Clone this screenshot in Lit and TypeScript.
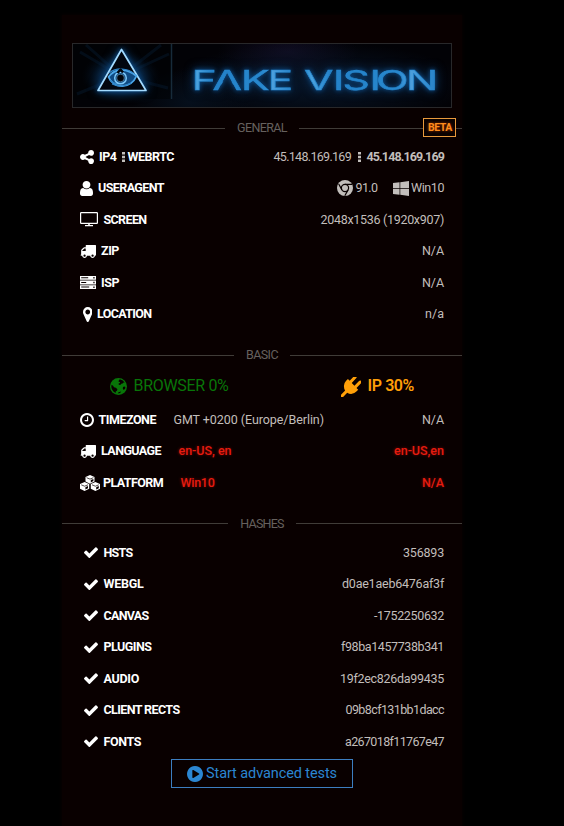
import { LitElement, html, svg, css } from "lit";
import { customElement, property } from "lit/decorators.js";
import { styleMap } from "lit/directives/style-map.js";

interface Icon { box: string; w: number; h: number; art: unknown }

const icons: Record<string, Icon> = {
  share: { box: "128 128 1536 1536", w: 14, h: 14, art: svg`<path d="M1344 1024q133 0 226.5 93.5t93.5 226.5-93.5 226.5-226.5 93.5-226.5-93.5-93.5-226.5q0-12 2-34l-360-180q-92 86-218 86-133 0-226.5-93.5t-93.5-226.5 93.5-226.5 226.5-93.5q126 0 218 86l360-180q-2-22-2-34 0-133 93.5-226.5t226.5-93.5 226.5 93.5 93.5 226.5-93.5 226.5-226.5 93.5q-126 0-218-86l-360 180q2 22 2 34t-2 34l360 180q92-86 218-86z"/>` },
  user: { box: "256 128 1280 1536", w: 13, h: 15, art: svg`<path d="M1536 1399q0 109-62.5 187t-150.5 78h-854q-88 0-150.5-78t-62.5-187q0-85 8.5-160.5t31.5-152 58.5-131 94-89 134.5-34.5q131 128 313 128t313-128q76 0 134.5 34.5t94 89 58.5 131 31.5 152 8.5 160.5zm-256-887q0 159-112.5 271.5t-271.5 112.5-271.5-112.5-112.5-271.5 112.5-271.5 271.5-112.5 271.5 112.5 112.5 271.5z"/>` },
  screen: { box: "0 0 18 15", w: 18, h: 15, art: svg`<path fill-rule="evenodd" d="M1.200 0h15.600Q18 0 18 1.200v9.600q0 1.200-1.200 1.200h-7v1h3.200v1.300h-8v-1.300h3.200v-1h-7Q0 12 0 10.800V1.200Q0 0 1.200 0zM1.200 1.200v9.600h15.600V1.200z"/>` },
  truck: { box: "0 256 1792 1408", w: 16, h: 13, art: svg`<path d="M640 1408q0-52-38-90t-90-38-90 38-38 90 38 90 90 38 90-38 38-90zm-384-512h384v-256h-158q-13 0-22 9l-195 195q-9 9-9 22v30zm1280 512q0-52-38-90t-90-38-90 38-38 90 38 90 90 38 90-38 38-90zm256-1088v1024q0 15-4 26.500t-13.500 18.500-16.500 11.500-23.500 6-22.500 2-25.500 0-22.500-.5q0 106-75 181t-181 75-181-75-75-181h-384q0 106-75 181t-181 75-181-75-75-181h-64q-3 0-22.500.5t-25.500 0-22.500-2-23.500-6-16.500-11.500-13.500-18.500-4-26.500q0-26 19-45t45-19v-320q0-8-.5-35t0-38 2.500-34.500 6.500-37 14-30.500 22.500-30l198-198q19-19 50.500-32t58.500-13h160v-192q0-26 19-45t45-19h1024q26 0 45 19t19 45z"/>` },
  server: { box: "0 0 16 13", w: 16, h: 13, art: svg`<path fill-rule="evenodd" d="M0 0h16v3.700H0zM1.200 1.300v1h7v-1zM13.300 1v1.500h1.300V1zM0 4.600h16v3.800H0zM1.200 6v1h5V6zM13.300 5.800v1.500h1.300V5.800zM0 9.300h16V13H0zM1.200 10.600v1h8v-1zM13.300 10.400v1.500h1.300v-1.500z"/>` },
  marker: { box: "384 128 1024 1536", w: 9.5, h: 15, art: svg`<path d="M1152 640q0-106-75-181t-181-75-181 75-75 181 75 181 181 75 181-75 75-181zm256 0q0 109-33 179l-364 774q-16 33-47.500 52t-67.500 19-67.500-19-46.500-52l-365-774q-33-70-33-179 0-212 150-362t362-150 362 150 150 362z"/>` },
  clock: { box: "128 128 1536 1536", w: 14, h: 14, art: svg`<path d="M1024 544v448q0 14-9 23t-23 9h-320q-14 0-23-9t-9-23v-64q0-14 9-23t23-9h224v-352q0-14 9-23t23-9h64q14 0 23 9t9 23zm416 352q0-148-73-273t-198-198-273-73-273 73-198 198-73 273 73 273 198 198 273 73 273-73 198-198 73-273zm224 0q0 209-103 385.500t-279.500 279.500-385.500 103-385.500-103-279.500-279.500-103-385.500 103-385.500 279.500-279.500 385.500-103 385.500 103 279.500 279.500 103 385.500z"/>` },
  cubes: { box: "0 0 20 16", w: 20, h: 16, art: svg`<path d="M10 0l4.500 1.900v4.700L10 8.800 5.500 6.600V1.900z"/><path d="M4.600 7.100l4.600 1.900v4.800L4.600 16 0 13.800V9z"/><path d="M15.400 7.100L20 9v4.800L15.400 16l-4.600-2.200V9z"/><g fill="none" stroke="#090000" stroke-width=".7"><path d="M6.600 2.700L10 4.100l3.400-1.400M1.200 9.800l3.400 1.400L8 9.800M12 9.800l3.400 1.400 3.400-1.400"/></g><g fill="#090000"><path d="M10.800 5.100l2.600-1.100v2.100l-2.600 1.300zM5.400 12.200L8 11.100v2.100l-2.600 1.300zM16.200 12.200l2.600-1.100v2.100l-2.600 1.300z"/></g>` },
  check: { box: "121 309 1550 1213", w: 14, h: 11, art: svg`<path d="M1671 566q0 40-28 68l-724 724-136 136q-28 28-68 28t-68-28l-136-136-362-362q-28-28-28-68t28-68l136-136q28-28 68-28t68 28l294 295 656-657q28-28 68-28t68 28l136 136q28 28 28 68z"/>` },
  play: { box: "128 128 1536 1536", w: 16, h: 16, art: svg`<path d="M896 128q209 0 385.500 103t279.500 279.500 103 385.500-103 385.500-279.500 279.500-385.500 103-385.500-103-279.500-279.500-103-385.500 103-385.500 279.500-279.500 385.500-103zm384 823q32-18 32-55t-32-55l-544-320q-31-19-64-1-32 19-32 56v640q0 37 32 56 16 8 32 8 17 0 32-9z"/>` },
  plug: { box: "0 128 1792 1664", w: 20.5, h: 20, art: svg`<path d="M1755 453q37 38 37 90.500t-37 90.500l-401 400 150 150-160 160q-163 163-389.500 186.500t-411.500-100.500l-362 362h-181v-181l362-362q-124-185-100.500-411.500t186.500-389.500l160-160 150 150 400-401q38-37 91-37t90 37 37 90.500-37 90.500l-400 401 234 234 401-400q38-37 91-37t90 37z"/>` },
  windows: { box: "64 128 1664 1664", w: 16, h: 15, art: svg`<path d="M746 1006v651l-682-94v-557h682zm0-743v659h-682v-565zm982 743v786l-907-125v-661h907zm0-878v794h-907v-669z"/>` },
  chrome: { box: "0 0 16 16", w: 16, h: 16, art: svg`<circle cx="8" cy="8" r="8"/><g fill="none" stroke="#090000" stroke-width="1.200"><circle cx="8" cy="8" r="3.600"/><path d="M8 4.400h7M4.900 9.900L1.700 4M11.100 9.900L7.800 15.700"/></g>` },
  globe: { box: "0 0 17 17", w: 17, h: 17, art: svg`<circle cx="8.500" cy="8.500" r="8.500"/><path fill="#090000" d="M9.800 1.200l3 1.300 1.900 2.300-1.200-.2-.9.900-1.300.2-1 1.300-1.500-.2-.2-1.200 1.500-.6-.2-1-1.300-.3.200-1.200zM1.500 6.700l1.600 1.100.9 1.500 1.900.5 1.500 1.400-.5 1.500-1.200.9v1.300l-2.300-1.500-1.600-2.300-.5-2.100zM13 9l1.400-.6 1 .7-.3 1.600-1.300 1.200-1-1.200zM8.500 14.200l2.700-.7-1.100 1.600-2.300.5z"/>` },
};

const icon = (name: string) => {
  const i = icons[name];
  return html`<svg class="icon" viewBox=${i.box} width=${i.w} height=${i.h} preserveAspectRatio="none">${i.art}</svg>`;
};

/* Text tracked out or in so that it fills a given measure. */
@customElement("fit-text")
export class FitText extends LitElement {
  @property() text = "";
  @property({ type: Number }) measure = 0;
  static styles = css`
    :host { display: block; white-space: pre; flex: none; }
  `;
  updated() {
    const span = this.renderRoot.querySelector("span")!;
    span.style.letterSpacing = "0px";
    const natural = span.getBoundingClientRect().width;
    span.style.letterSpacing = (this.measure - natural) / this.text.length + "px";
  }
  render() {
    return html`<div style=${styleMap({ width: this.measure + "px" })}><span>${this.text}</span></div>`;
  }
}

const fit = (text: string, measure: number, cls = "") =>
  html`<fit-text class=${cls} .text=${text} .measure=${measure}></fit-text>`;

const dots = html`<svg class="dots" width="3" height="10" viewBox="0 0 3 10"><path d="M0 0h3v2.600H0zM0 3.700h3v2.600H0zM0 7.400h3V10H0z"/></svg>`;

interface Row { icon: string; slot: number; label: unknown; mid?: unknown; value: unknown }

const name = (t: string, w: number) => fit(t, w, "name");

const general: Row[] = [
  { icon: "share", slot: 19, label: html`${name("IP4", 17.5)}<i class="gap5"></i>${dots}<i class="gap2"></i>${name("WEBRTC", 46.5)}`,
    value: html`${fit("45.148.169.169", 77.5)}<i class="gap7"></i>${dots}<i class="gap5"></i>${fit("45.148.169.169", 77.5, "strong")}` },
  { icon: "user", slot: 18, label: name("USERAGENT", 66),
    value: html`${icon("chrome")}<i class="gap2"></i>${fit("91.0", 22)}<i class="gap15"></i>${icon("windows")}<i class="gap2"></i>${fit("Win10", 33)}` },
  { icon: "screen", slot: 23.5, label: name("SCREEN", 43), value: fit("2048x1536 (1920x907)", 123.5) },
  { icon: "truck", slot: 21, label: name("ZIP", 18), value: fit("N/A", 22) },
  { icon: "server", slot: 21, label: name("ISP", 18), value: fit("N/A", 22) },
  { icon: "marker", slot: 17, label: name("LOCATION", 54.5), value: fit("n/a", 19) },
];

const basic: Row[] = [
  { icon: "clock", slot: 18.5, label: name("TIMEZONE", 57.5), mid: html`<i class="gap17"></i>${fit("GMT +0200 (Europe/Berlin)", 150.5)}`, value: fit("N/A", 22) },
  { icon: "truck", slot: 21, label: name("LANGUAGE", 60), mid: html`<i class="gap17"></i>${fit("en-US, en", 53, "bad")}`, value: fit("en-US,en", 50, "bad") },
  { icon: "cubes", slot: 23, label: name("PLATFORM", 60), mid: html`<i class="gap17"></i>${fit("Win10", 34, "bad")}`, value: fit("N/A", 22, "bad") },
];

const hashes: Row[] = ([
  ["HSTS", 29, "356893", 41],
  ["WEBGL", 40, "d0ae1aeb6476af3f", 102],
  ["CANVAS", 45, "-1752250632", 70],
  ["PLUGINS", 48, "f98ba1457738b341", 103],
  ["AUDIO", 35.5, "19f2ec826da99435", 104],
  ["CLIENT RECTS", 76, "09b8cf131bb1dacc", 98.5],
  ["FONTS", 37.5, "a267018f11767e47", 99],
] as [string, number, string, number][]).map(([l, lw, v, vw]) => ({ icon: "check", slot: 23.5, label: name(l, lw), value: fit(v, vw) }));

@customElement("app-root")
export class AppRoot extends LitElement {
  static styles = css`
    :host { display: block; height: 826px; background: #000; overflow: hidden;
      font: 12.5px/16px Roboto, "Noto Sans", sans-serif; color: #c2bebb; }
    * { box-sizing: border-box; }
    .panel { width: 400px; height: 811px; margin: 15px 0 0 62px; padding-top: 28px;
      background: #090000; box-shadow: 0 0 3px 1px #070000; display: flex; flex-direction: column; }
    .banner { width: 380px; height: 65px; margin: 0 10px; border: 1px solid #28282a; flex: none;
      background: radial-gradient(ellipse 60px 34px at 118px 58px, #050f1c, transparent),
        radial-gradient(ellipse 150px 42px at 245px 40px, #071528, transparent),
        radial-gradient(ellipse 70px 30px at 215px 8px, #100c20, transparent), #020206; }
    .banner svg { display: block; }
    .rule { display: flex; align-items: center; gap: 12px; height: 16px; color: #66615e; flex: none; position: relative; }
    .line { flex: 1; height: 1px; background: #403c38; }
    .r1 { margin-top: 12px; }
    .r2 { margin-top: 17px; }
    .r3 { margin-top: 17px; }
    .beta { position: absolute; left: 361px; top: -2px; width: 33px; height: 19px; border: 1px solid #e99a3c;
      background: #0b0200; color: #ff8c1c; font-weight: 700; font-size: 10.5px; line-height: 18px; padding-left: 4px; text-shadow: 0 0 3px #a33a00; }
    .rows { display: grid; grid-auto-rows: 31.5px; padding: 0 18px; flex: none; }
    .g { margin-top: 5px; }
    .h { margin-top: 5.5px; }
    .row { display: flex; align-items: center; }
    .slot { display: flex; flex: none; color: #fff; }
    .slot.check .icon { margin-left: 4px; }
    .slot.marker .icon { margin-left: 2.5px; }
    .icon, .dots { display: block; fill: currentColor; flex: none; }
    .name { color: #fff; font-weight: 700; }
    .strong { font-weight: 700; }
    .bad { color: #e51c10; text-shadow: 0 0 3px #7a0800; font-weight: 500; }
    .value { margin-left: auto; display: flex; align-items: center; }
    .gap2 { width: 2.5px; } .gap5 { width: 5.5px; } .gap7 { width: 7px; } .gap15 { width: 15px; } .gap17 { width: 17.5px; }
    .scores { display: flex; height: 41px; padding: 5px 48px 0; align-items: center; flex: none; font-size: 16px; line-height: 20px; }
    .score { display: flex; align-items: center; gap: 6.5px; }
    .score .icon { margin-top: 1px; }
    .good { color: #087508; }
    .warn { color: #ff9f08; margin-left: auto; font-weight: 600; }
    .start { align-self: center; width: 182px; height: 29px; border: 1px solid #3c7ec0; background: none; padding: 1px 0 0 15px;
      display: flex; align-items: center; gap: 3px; color: #2b86d2; font: 14.5px/18px Roboto, sans-serif; flex: none; margin-top: 1.5px; }
    .logo { font: 400 27.5px Inter, sans-serif; }
    .glow { filter: drop-shadow(0 0 2px #0e4f8c) drop-shadow(0 0 5px #0a3560); }
  `;

  private row(r: Row) {
    return html`<div class="row">
      <div class="slot ${r.icon}" style=${styleMap({ width: r.slot + "px" })}>${icon(r.icon)}</div>
      ${r.label}${r.mid ?? ""}
      <div class="value">${r.value}</div>
    </div>`;
  }

  private banner() {
    const stretch = 1.55;
    const at = (...xs: number[]) => xs.map((x) => (x / stretch).toFixed(2)).join(" ");
    return html`<svg width="378" height="63" viewBox="73 44 378 63">
      <defs>
        <radialGradient id="halo"><stop offset="0" stop-color="#186bb4" stop-opacity=".95"/><stop offset=".5" stop-color="#0b3a69" stop-opacity=".6"/><stop offset="1" stop-color="#020811" stop-opacity="0"/></radialGradient>
        <linearGradient id="ink" x1="0" x2="1"><stop offset="0" stop-color="#2487cc"/><stop offset=".06" stop-color="#4aa2df"/><stop offset=".2" stop-color="#2381c8"/><stop offset=".7" stop-color="#2888ce"/><stop offset=".8" stop-color="#4c9fdc"/><stop offset="1" stop-color="#237fc6"/></linearGradient>
        <mask id="open" maskUnits="userSpaceOnUse" x="180" y="60" width="270" height="40"><rect x="180" y="60" width="270" height="40" fill="#fff"/><path d="M227.300 74l9.300 17h-18.600z" fill="#000"/></mask>
      </defs>
      <path fill="#000104" opacity=".5" d="M73 44h98v55H73z"/>
      <g stroke="#0a2746" opacity=".3" stroke-width="3"><path d="M121 76L80 52M121 76L86 45M121 76l48-22M121 76l40-31M121 76l-44 18M121 76l47 12"/></g>
      <ellipse cx="121" cy="77" rx="40" ry="27" fill="url(#halo)"/>
      <path d="M171.500 44v55" stroke="#172b3a" stroke-width="1.500"/>
      <g class="glow" fill="none" stroke-linejoin="round">
        <path d="M121.500 49.500L98 90.500h48z" stroke="#a4dbff" stroke-width="1.700" fill="#02060e"/>
        <path d="M108.500 77q5-7 13-7t15 6q-4 9.500-14 10-10 .5-14-9z" stroke="#4ba6e8" stroke-width="1.800" fill="#0f4a82"/>
        <path d="M109 73q6-4.500 13-4t11 4M112 84q9 4.500 19-1M110 80q4 4 8 4" stroke="#2f83c6" stroke-width="1.200"/>
        <circle cx="120.500" cy="78" r="5.800" stroke="#7cc6f6" stroke-width="1.500"/>
        <circle cx="120.500" cy="78" r="3.800" fill="#01050b" stroke="#6a9fc5" stroke-width=".6"/>
        <path d="M117.500 73l3-3.500 2.500 3" stroke="#01050b" stroke-width="2.500"/>
      </g>
      <g class="glow"><g mask="url(#open)"><g class="logo" fill="url(#ink)" stroke="#2787cd" stroke-width=".5" transform="scale(${stretch} 1)">
        <text x=${at(191.5, 212.5, 241, 267.5)} y="90">FAKE</text>
        <text x=${at(304, 333, 342.5, 369.5, 376, 406)} y="90">VISION</text>
      </g></g></g>
    </svg>`;
  }

  render() {
    return html`<main class="panel">
      <div class="banner">${this.banner()}</div>
      <div class="rule r1"><i class="line"></i>${fit("GENERAL", 50)}<i class="line"></i><div class="beta">${fit("BETA", 24)}</div></div>
      <section class="rows g">${general.map((r) => this.row(r))}</section>
      <div class="rule r2"><i class="line"></i>${fit("BASIC", 32)}<i class="line"></i></div>
      <div class="scores">
        <div class="score good">${icon("globe")}${fit("BROWSER 0%", 95)}</div>
        <div class="score warn">${icon("plug")}${fit("IP 30%", 46.5)}</div>
      </div>
      <section class="rows">${basic.map((r) => this.row(r))}</section>
      <div class="rule r3"><i class="line"></i>${fit("HASHES", 43.5)}<i class="line"></i></div>
      <section class="rows h">${hashes.map((r) => this.row(r))}</section>
      <button class="start">${icon("play")}${fit("Start advanced tests", 131)}</button>
    </main>`;
  }
}
